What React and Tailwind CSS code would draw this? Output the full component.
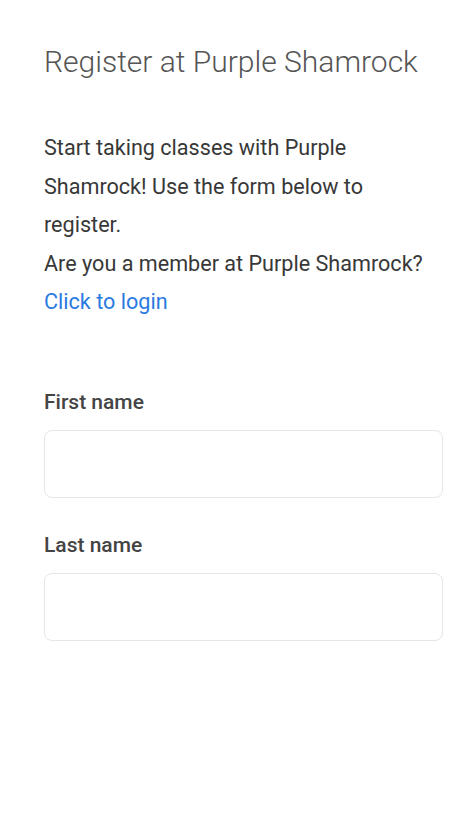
export default function App() {
    return (
        <div className="min-h-screen bg-white font-['Roboto',sans-serif] pl-[44px] pr-[32px] pt-[44px]">
            <h1 className="text-[30px] font-light leading-[36px] text-[#555]">
                Register at Purple Shamrock
            </h1>

            <div className="mt-[49px] text-[21.6px] leading-[38.5px] text-[#383838]">
                <p>Start taking classes with Purple Shamrock! Use the form below to register.</p>
                <p>Are you a member at Purple Shamrock?</p>
                <a href="#" className="text-[#2a7ae2]">Click to login</a>
            </div>

            <form className="mt-[66px] space-y-[33px]">
                <Field label="First name" />
                <Field label="Last name" />
            </form>
        </div>
    );
}

function Field({ label }) {
    return (
        <div>
            <label className="block text-[21px] font-medium leading-[28px] text-[#444]">{label}</label>
            <input
                type="text"
                className="mt-[14px] block h-[68px] w-full rounded-[8px] border border-[#e6e6e6] bg-white px-4 outline-none"
            />
        </div>
    );
}
